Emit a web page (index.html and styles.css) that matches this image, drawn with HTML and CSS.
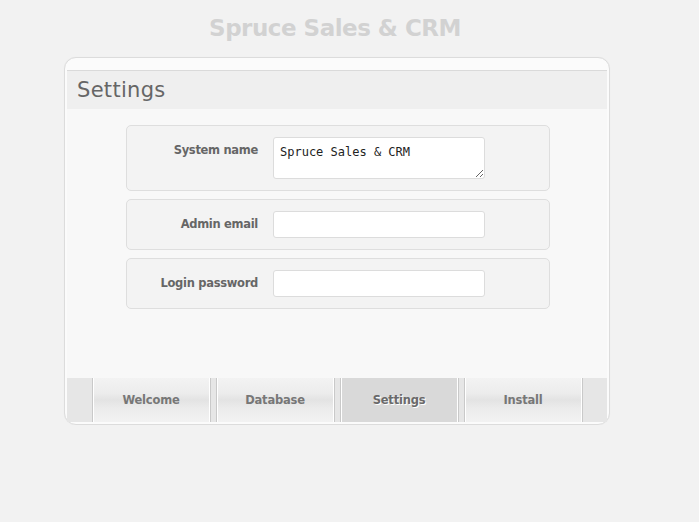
FILE: index.html
```html
<!DOCTYPE html>
<html>
<head>
<meta charset="utf-8">
<title>Spruce Sales &amp; CRM - Settings</title>
<link rel="stylesheet" href="styles.css">
</head>
<body>
<div class="page">
  <h1 class="title">Spruce Sales &amp; CRM</h1>
  <div class="panel">
    <div class="panel-head">Settings</div>
    <div class="panel-body">
      <div class="row">
        <label class="label" for="sysname">System name</label>
        <textarea id="sysname" class="field area">Spruce Sales &amp; CRM</textarea>
      </div>
      <div class="row">
        <label class="label" for="email">Admin email</label>
        <input id="email" class="field" type="text">
      </div>
      <div class="row">
        <label class="label" for="pass">Login password</label>
        <input id="pass" class="field" type="password">
      </div>
    </div>
    <div class="tabs">
      <div class="spacer"></div>
      <div class="tab">Welcome</div>
      <div class="tab">Database</div>
      <div class="tab active">Settings</div>
      <div class="tab">Install</div>
      <div class="spacer"></div>
    </div>
  </div>
</div>
</body>
</html>
```
FILE: styles.css
```css
html, body {
  margin: 0;
  padding: 0;
  background: #f2f2f2;
  font-family: "DejaVu Sans", Verdana, sans-serif;
  color: #666;
}

.page {
  width: 546px;
  margin-left: 64px;
}

.title {
  margin: 0;
  height: 57px;
  box-sizing: border-box;
  padding: 14px 4px 0 0;
  text-align: center;
  font-size: 23px;
  line-height: 28px;
  font-weight: bold;
  color: #d2d2d2;
  letter-spacing: -0.5px;
}

.panel {
  border: 1px solid #dcdcdc;
  border-radius: 12px;
  background: #fbfbfb;
  padding: 12px 2px 2px;
  box-shadow: 0 0 1px rgba(0,0,0,0.05);
}

.panel-head {
  border-top: 1px solid #dadada;
  background: #efefef;
  height: 38px;
  padding-left: 10px;
  font-size: 21px;
  line-height: 39px;
  color: #666;
  letter-spacing: 0.3px;
}

.panel-body {
  background: #f8f8f8;
  padding: 16px 0 69px 2px;
  display: flex;
  flex-direction: column;
  align-items: center;
  gap: 8px;
}

.row {
  width: 424px;
  box-sizing: border-box;
  background: #f3f3f3;
  border: 1px solid #dedede;
  border-radius: 5px;
  padding: 11px 0;
  display: flex;
  align-items: flex-start;
}

.label {
  width: 131px;
  text-align: right;
  font-size: 11.5px;
  font-weight: bold;
  color: #666;
  line-height: 27px;
  padding-right: 15px;
  letter-spacing: -0.3px;
}

.field {
  width: 212px;
  height: 27px;
  box-sizing: border-box;
  border: 1px solid #dcdcdc;
  border-radius: 3px;
  background: #fff;
  margin: 0;
  font-family: "DejaVu Sans Mono", monospace;
  font-size: 12px;
  color: #222;
  outline: none;
}

.area {
  height: 42px;
  padding: 7px 6px 5px;
  resize: vertical;
  line-height: 15px;
}

.tabs {
  display: flex;
  height: 44px;
  background: #e6e6e6;
  gap: 5px;
}

.spacer {
  flex: 1;
}

.tab {
  width: 117px;
  border-left: 1px solid #c9c9c9;
  border-right: 1px solid #c9c9c9;
  box-shadow: inset 1px 0 0 #fff, inset -1px 0 0 #fff;
  background: linear-gradient(#f3f3f3 0%, #ececec 35%, #e3e3e3 50%, #ececec 70%, #f2f2f2 100%);
  text-align: center;
  font-size: 11.5px;
  font-weight: bold;
  line-height: 44px;
  color: #777;
  letter-spacing: -0.2px;
}

.tab.active {
  background: #d9d9d9;
  color: #6a6a6a;
  text-shadow: 1px 1px 0 #fff;
}
```
